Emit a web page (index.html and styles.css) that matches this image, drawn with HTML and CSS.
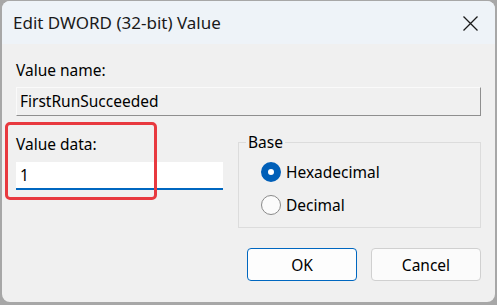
FILE: index.html
```html
<!DOCTYPE html>
<html>
<head>
<meta charset="utf-8">
<link rel="stylesheet" href="styles.css">
</head>
<body>
<div class="window">
  <div class="titlebar">
    <span class="title">Edit DWORD (32-bit) Value</span>
    <svg class="close" width="15" height="15" viewBox="0 0 15 15"><path d="M0.5 0.5 L14.5 14.5 M14.5 0.5 L0.5 14.5" stroke="#1a1a1a" stroke-width="1.3" fill="none"/></svg>
  </div>
  <div class="content">
    <div class="label name-label">Value name:</div>
    <div class="namebox">FirstRunSucceeded</div>
    <div class="row">
      <div class="datacol">
        <div class="label">Value data:</div>
        <div class="databox">1</div>
        <div class="highlight"></div>
      </div>
      <fieldset class="base">
        <legend>Base</legend>
        <div class="radio"><span class="dot checked"></span>Hexadecimal</div>
        <div class="radio"><span class="dot"></span>Decimal</div>
      </fieldset>
    </div>
    <div class="buttons">
      <div class="btn primary">OK</div>
      <div class="btn">Cancel</div>
    </div>
  </div>
</div>
</body>
</html>
```
FILE: styles.css
```css
html, body { margin: 0; padding: 0; }
body {
  background: #a7a7a7;
  width: 497px;
  height: 305px;
  overflow: hidden;
  font-family: "Noto Sans", "Open Sans", sans-serif;
  color: #000;
}
.window {
  margin: 1px 2px 0 2px;
  width: 493px;
  height: 301px;
  border-radius: 8px;
  background: #f0f0f0;
  overflow: hidden;
  display: flex;
  flex-direction: column;
}
.titlebar {
  height: 43px;
  background: #eef3f8;
  display: flex;
  align-items: center;
  justify-content: space-between;
  padding: 0 17px 0 11px;
  flex: none;
}
.title { font-size: 17px; color: #1a1a1a; }
.close { margin-top: 1px; }
.content {
  padding: 0 14px 0 14px;
  display: flex;
  flex-direction: column;
  font-size: 15.5px;
}
.label { line-height: 20px; }
.name-label { margin-top: 16px; }
.namebox {
  margin-top: 7px;
  height: 29px;
  box-sizing: border-box;
  border: 1px solid #fafafa;
  border-right-color: #8f8f8f;
  border-bottom-color: #8f8f8f;
  padding: 0 0 0 3px;
  line-height: 26px;
}
.row {
  display: flex;
  margin-top: 17px;
  gap: 15px;
}
.datacol {
  position: relative;
  width: 207px;
  padding-top: 1px;
}
.databox {
  margin-top: 8px;
  height: 28px;
  box-sizing: border-box;
  background: #fff;
  border-bottom: 2px solid #0067c0;
  padding-left: 4px;
  line-height: 27px;
}
.highlight {
  position: absolute;
  left: -11px;
  top: -11px;
  width: 152px;
  height: 78px;
  box-sizing: border-box;
  border: 3px solid #e8393f;
  border-radius: 5px;
}
.base {
  margin: 0;
  padding: 4px 0 0 0;
  width: 243px;
  height: 95px;
  box-sizing: border-box;
  border: 1px solid #dcdcdc;
  min-width: 0;
}
.base legend {
  padding: 0 2px;
  margin-left: 7px;
  line-height: 18px;
}
.radio {
  display: flex;
  align-items: center;
  height: 33px;
  margin-left: 22px;
}
.dot {
  width: 20px;
  height: 20px;
  box-sizing: border-box;
  border-radius: 50%;
  border: 1px solid #8a8a8a;
  background: #fbfbfb;
  margin-right: 5px;
  flex: none;
}
.dot.checked {
  border: 7px solid #005fb8;
  background: #fff;
}
.buttons {
  display: flex;
  justify-content: flex-end;
  gap: 14px;
  margin-top: 20px;
  padding-right: 0;
}
.btn {
  width: 110px;
  height: 33px;
  box-sizing: border-box;
  border: 1px solid #d0d0d0;
  border-radius: 4px;
  background: #fbfbfb;
  display: flex;
  align-items: center;
  justify-content: center;
  font-size: 15.5px;
}
.btn.primary {
  border-color: #0067c0;
  background: #fdfdfd;
}
```
